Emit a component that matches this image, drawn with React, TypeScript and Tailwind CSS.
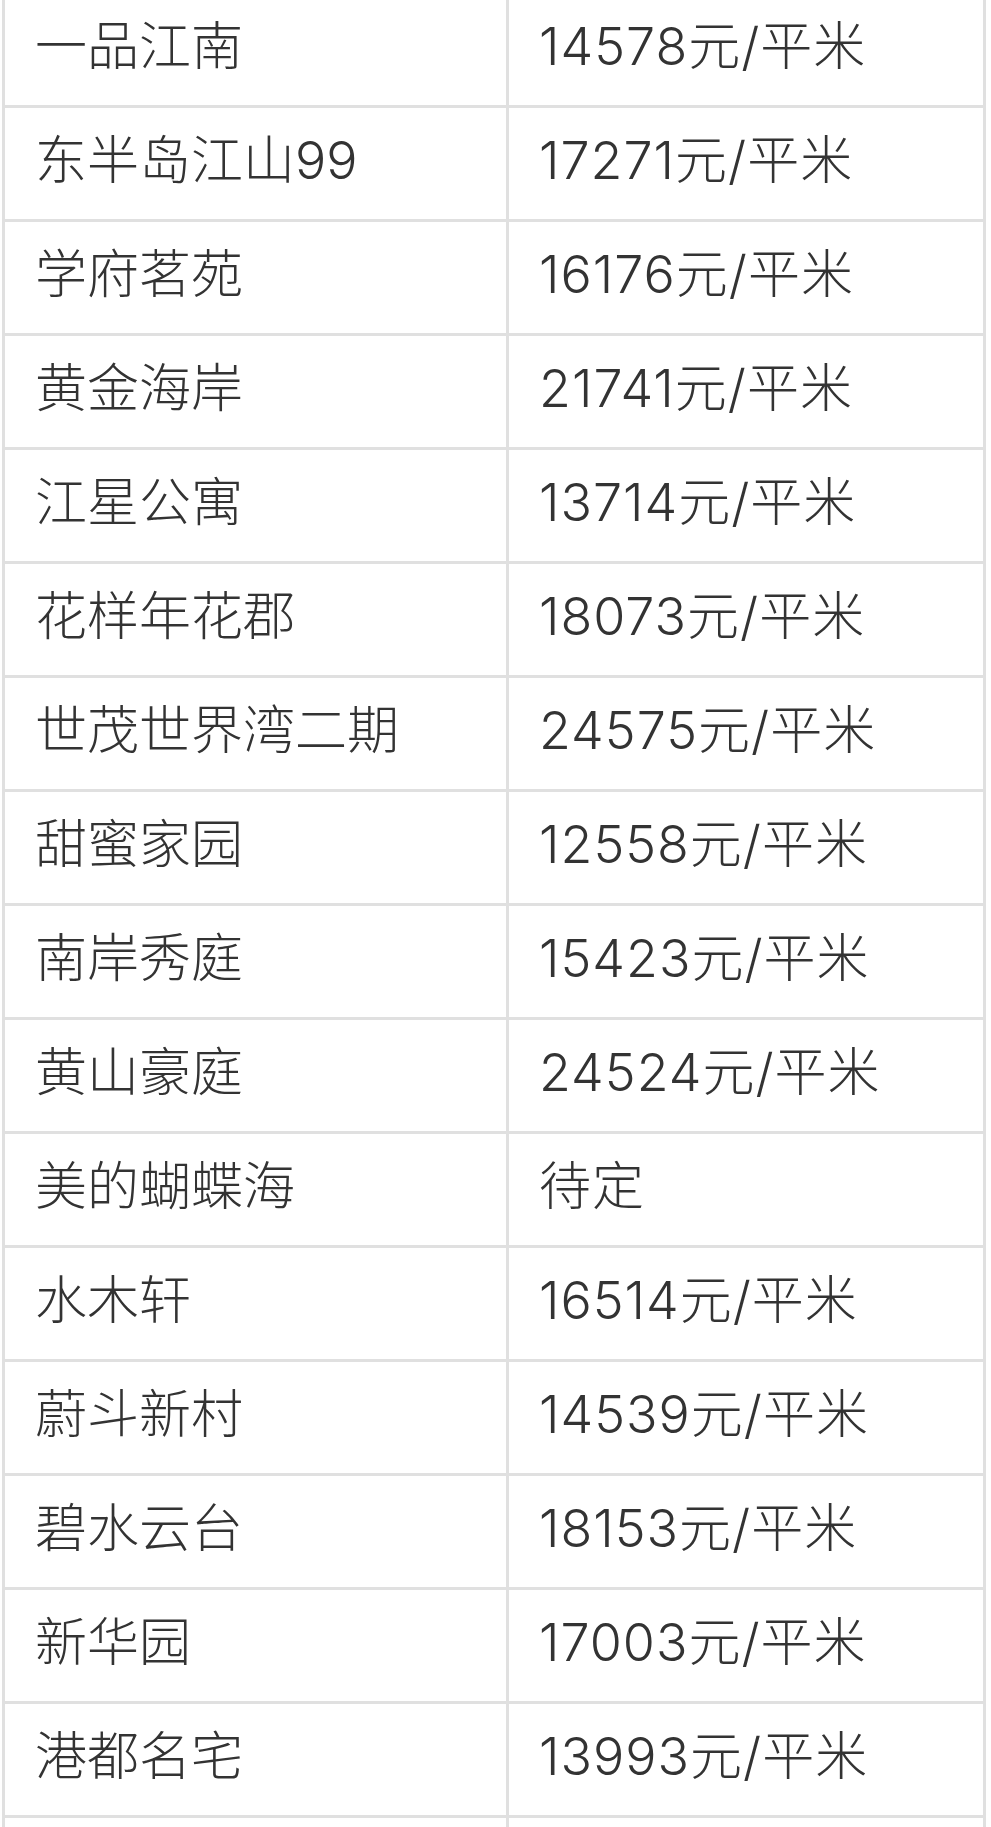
const rows: [string, string][] = [
  ['一品江南', '14578元/平米'],
  ['东半岛江山99', '17271元/平米'],
  ['学府茗苑', '16176元/平米'],
  ['黄金海岸', '21741元/平米'],
  ['江星公寓', '13714元/平米'],
  ['花样年花郡', '18073元/平米'],
  ['世茂世界湾二期', '24575元/平米'],
  ['甜蜜家园', '12558元/平米'],
  ['南岸秀庭', '15423元/平米'],
  ['黄山豪庭', '24524元/平米'],
  ['美的蝴蝶海', '待定'],
  ['水木轩', '16514元/平米'],
  ['蔚斗新村', '14539元/平米'],
  ['碧水云台', '18153元/平米'],
  ['新华园', '17003元/平米'],
  ['港都名宅', '13993元/平米'],
  ['', ''],
]

export default function App() {
  return (
    <div
      className="h-[1827px] overflow-hidden bg-white pl-[2px] font-light text-[#333333]"
      style={{ fontFamily: 'Inter, "Noto Sans CJK SC", sans-serif' }}
    >
      {/* table is scrolled a little: first row's top border sits above the window */}
      <div className="-mt-[9px] w-[984px] border-x-[3px] border-[#e0e0e0]">
        {rows.map(([name, price], i) => (
          <div key={i} className="flex h-[114px] border-t-[3px] border-[#e0e0e0]">
            <div className="flex w-[504px] items-center border-r-[3px] border-[#e0e0e0] pb-[6px] pl-[30px] text-[52px]">
              {name}
            </div>
            <div className="flex flex-1 items-center pb-[6px] pl-[30px] text-[52px] tracking-[1px]">
              {price}
            </div>
          </div>
        ))}
      </div>
    </div>
  )
}
